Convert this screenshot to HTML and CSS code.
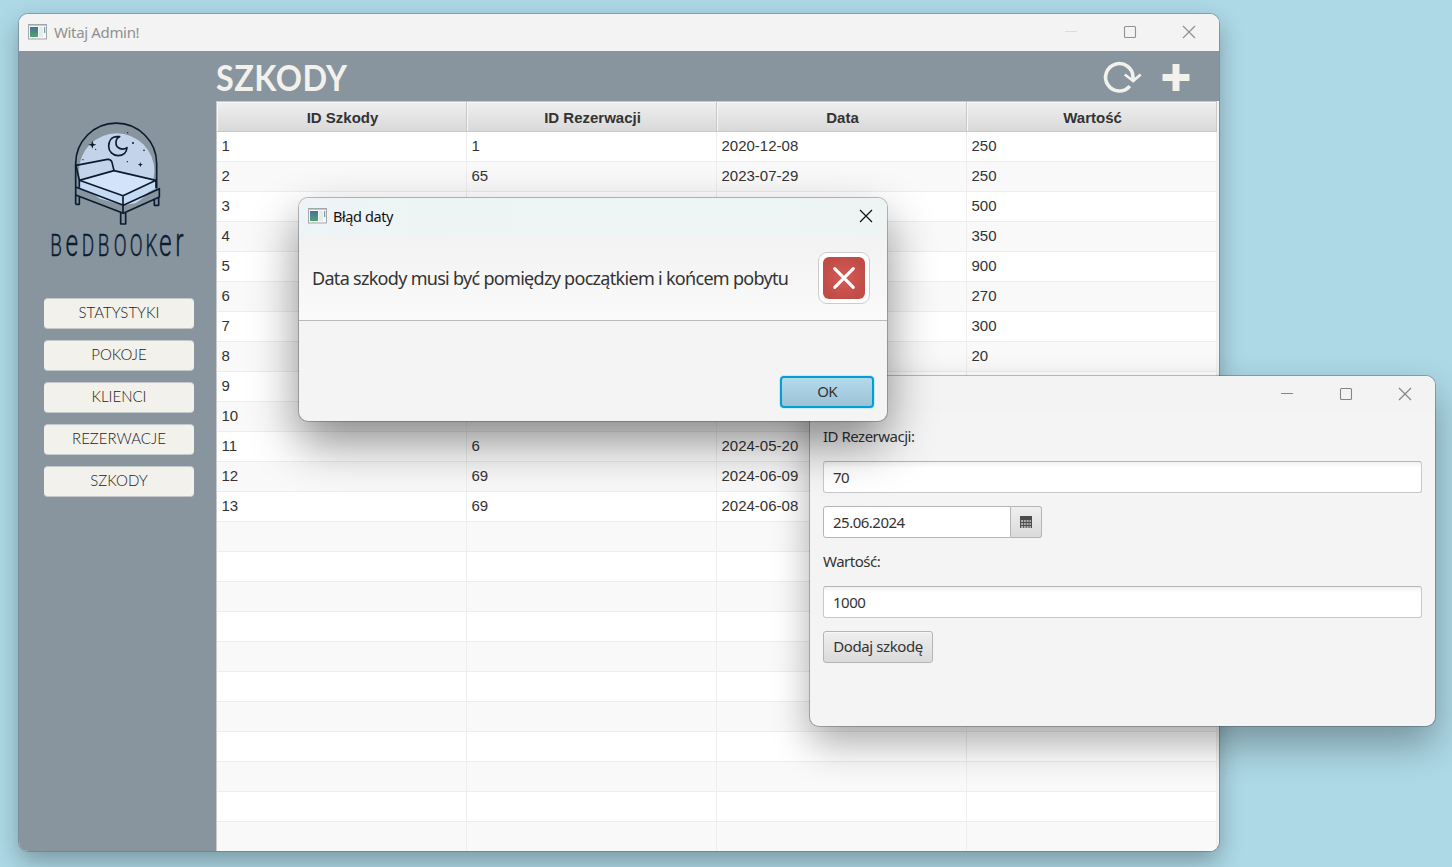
FILE: index.html
```html
<!DOCTYPE html>
<html lang="pl">
<head>
<meta charset="utf-8">
<title>Witaj Admin!</title>
<link rel="stylesheet" href="styles.css">
</head>
<body>
<svg class="defs" width="0" height="0">
  <defs>
    <linearGradient id="g" x1="0" y1="0" x2="0" y2="1"><stop offset="0" stop-color="#47709a"/><stop offset="1" stop-color="#4fa570"/></linearGradient>
    <symbol id="app" viewBox="0 0 20 16">
      <rect x=".5" y=".5" width="18" height="14.5" fill="#f6f7f7" stroke="#a2a7ad"/>
      <path d="M1 1.5h17" stroke="#c3c8d2"/>
      <rect x="2" y="3" width="8" height="10" fill="url(#g)"/>
      <rect x="11" y="3" width="4" height="10" fill="#e9ebeb"/>
      <path d="M16.7 3v6" stroke="#4f9499"/>
    </symbol>
    <symbol id="min" viewBox="0 0 14 14"><path d="M1 6.5h12" stroke="currentColor"/></symbol>
    <symbol id="max" viewBox="0 0 14 14"><rect x="1.5" y="1.5" width="11" height="11" rx="1" fill="none" stroke="currentColor" stroke-width="1.1"/></symbol>
    <symbol id="close" viewBox="0 0 14 14"><path d="M1 1l12 12M13 1L1 13" stroke="currentColor" stroke-width="1.2"/></symbol>
  </defs>
</svg>

<section class="window main">
  <header class="titlebar inactive">
    <svg class="app"><use href="#app"/></svg><span class="t-main">Witaj Admin!</span>
    <div class="controls"><svg class="faint"><use href="#min"/></svg><svg><use href="#max"/></svg><svg><use href="#close"/></svg></div>
  </header>
  <div class="body">
    <aside>
      <svg class="logo" viewBox="0 0 480 465" width="160" height="155">
        <circle cx="230" cy="180" r="113" fill="#c3d3e9"/>
        <path d="M118 208L222 179L348 208L249 254Z" fill="#d3e4fa"/>
        <path d="M118 208L249 254L348 208V232L250 282L118 232Z" fill="#c7daf3"/>
        <path d="M107 228L250 283L358 233V258L250 307L107 252Z" fill="#88949e"/>
        <path d="M139 235L249 277L326 241Q312 262 286 277L250 283L180 263Z" fill="#c7daf3"/>
        <path d="M165 274L249 307L320 275Q291 292 230 293Q190 288 165 274Z" fill="#88949e"/>
        <g fill="none" stroke="#0b1c31" stroke-width="5" stroke-linejoin="round">
          <path d="M107 280V158A121 121 0 0 1 350 158V232"/>
          <path d="M108 163L202 145Q213 144 216 154L222 179L118 208Z"/>
          <path d="M222 179L348 208L249 254L118 208M249 254V305M118 208V230M348 208V232"/>
          <path d="M107 228L250 283L358 233V258L250 307L107 252M107 280H118V256M242 306V339H257V304M343 267V283H356V258"/>
          <path d="M231 77C212 77 206 93 206 106A28 28 0 0 0 234 134C251 134 260 123 261 110C247 119 227 112 228 94C228 86 231 80 239 77Z"/>
        </g>
        <g fill="#0b1c31">
          <path d="M157 89l3 9 9 3-9 3-3 9-3-9-9-3 9-3z"/><path d="M301 153l2 6 6 2-6 2-2 6-2-6-6-2 6-2z"/>
          <circle cx="279" cy="96" r="3"/><circle cx="312" cy="118" r="2.5"/><circle cx="262" cy="152" r="2"/><circle cx="263" cy="65" r="2"/><circle cx="129" cy="146" r="2"/><circle cx="167" cy="115" r="2"/>
        </g>
        <text class="wordmark" transform="translate(0 434) scale(.62 1)" font-size="92"><tspan x="50">B</tspan><tspan x="124" font-size="118">e</tspan><tspan x="202" font-size="92">D</tspan><tspan x="279">B</tspan><tspan x="357">O</tspan><tspan x="434">O</tspan><tspan x="511">K</tspan><tspan x="576" font-size="118">e</tspan><tspan x="655" font-size="120">r</tspan></text>
      </svg>
      <nav>
        <button>STATYSTYKI</button>
        <button>POKOJE</button>
        <button>KLIENCI</button>
        <button>REZERWACJE</button>
        <button>SZKODY</button>
      </nav>
    </aside>
    <main>
      <div class="heading">
        <h1>SZKODY</h1>
        <div class="actions">
          <svg width="40" height="36" viewBox="0 0 40 36"><path d="M27.8 26.1A13.7 13.7 0 1 1 31 17.3V20" fill="none" stroke="#f2f1eb" stroke-width="3.6"/><path d="M22.8 14.5L31.2 21L38.7 14.5" fill="none" stroke="#f2f1eb" stroke-width="2.8"/></svg>
          <svg width="28" height="28" viewBox="0 0 28 28"><path d="M10.5 0h7v10h10v7h-10v10h-7v-10h-10v-7h10z" fill="#f2f1eb"/></svg>
        </div>
      </div>
      <table>
        <thead><tr><th>ID Szkody</th><th>ID Rezerwacji</th><th>Data</th><th>Wartość</th></tr></thead>
        <tbody>
          <tr><td>1</td><td>1</td><td>2020-12-08</td><td>250</td></tr>
          <tr><td>2</td><td>65</td><td>2023-07-29</td><td>250</td></tr>
          <tr><td>3</td><td></td><td></td><td>500</td></tr>
          <tr><td>4</td><td></td><td></td><td>350</td></tr>
          <tr><td>5</td><td></td><td></td><td>900</td></tr>
          <tr><td>6</td><td></td><td></td><td>270</td></tr>
          <tr><td>7</td><td></td><td></td><td>300</td></tr>
          <tr><td>8</td><td></td><td></td><td>20</td></tr>
          <tr><td>9</td><td></td><td></td><td></td></tr>
          <tr><td>10</td><td></td><td></td><td></td></tr>
          <tr><td>11</td><td>6</td><td>2024-05-20</td><td></td></tr>
          <tr><td>12</td><td>69</td><td>2024-06-09</td><td></td></tr>
          <tr><td>13</td><td>69</td><td>2024-06-08</td><td></td></tr>
          <tr><td></td><td></td><td></td><td></td></tr>
          <tr><td></td><td></td><td></td><td></td></tr>
          <tr><td></td><td></td><td></td><td></td></tr>
          <tr><td></td><td></td><td></td><td></td></tr>
          <tr><td></td><td></td><td></td><td></td></tr>
          <tr><td></td><td></td><td></td><td></td></tr>
          <tr><td></td><td></td><td></td><td></td></tr>
          <tr><td></td><td></td><td></td><td></td></tr>
          <tr><td></td><td></td><td></td><td></td></tr>
          <tr><td></td><td></td><td></td><td></td></tr>
          <tr><td></td><td></td><td></td><td></td></tr>
        </tbody>
      </table>
    </main>
  </div>
</section>

<section class="window form">
  <header class="titlebar inactive">
    <div class="controls"><svg><use href="#min"/></svg><svg><use href="#max"/></svg><svg><use href="#close"/></svg></div>
  </header>
  <div class="fields">
    <label class="l1">ID Rezerwacji:</label>
    <div class="input">70</div>
    <div class="date"><div class="input">25.06.2024</div><div class="picker"><svg width="12" height="12" viewBox="0 0 12 12"><path d="M0 0h12v12H0z" fill="#4c4c4c"/><path d="M1 5h10M1 8h10M1 11h10" stroke="#ccc" stroke-width="1.6" stroke-dasharray="2 .8"/></svg></div></div>
    <label class="l2">Wartość:</label>
    <div class="input">1000</div>
    <button class="add">Dodaj szkodę</button>
  </div>
</section>

<section class="window dialog">
  <header class="titlebar">
    <svg class="app"><use href="#app"/></svg><span class="t-dialog">Błąd daty</span>
    <div class="controls"><svg><use href="#close"/></svg></div>
  </header>
  <div class="message"><p>Data szkody musi być pomiędzy początkiem i końcem pobytu</p>
    <div class="error"><svg width="42" height="42" viewBox="0 0 43 43"><path d="M12 12L31 31M31 12L12 31" stroke="#fff" stroke-width="3.2" stroke-linecap="round"/></svg></div>
  </div>
  <div class="foot"><button class="ok">OK</button></div>
</section>
</body>
</html>
```

FILE: styles.css
```css
* { box-sizing: border-box; }
body {
  margin: 0;
  width: 1452px;
  height: 867px;
  overflow: hidden;
  position: relative;
  background: #add8e6;
  font: 15px "Noto Sans", sans-serif;
  color: #333;
}
.defs { position: absolute; }
button { font: inherit; color: inherit; padding: 0; }

/* windows */
.window {
  position: absolute;
  border-radius: 9px;
  background: #f4f4f4;
  display: flex;
  flex-direction: column;
  overflow: hidden;
}
.main {
  left: 19px; top: 14px; width: 1200px; height: 837px;
  box-shadow: 0 0 0 1px rgba(80,90,95,.4), 0 10px 24px rgba(0,0,0,.3);
}
.form {
  left: 810px; top: 376px; width: 625px; height: 350px;
  box-shadow: 0 0 0 1px rgba(60,65,70,.35), 0 18px 38px rgba(0,0,0,.32);
}
.dialog {
  left: 299px; top: 198px; width: 588px; height: 223px;
  box-shadow: 0 0 0 1px rgba(60,65,70,.35), 0 22px 48px rgba(0,0,0,.45);
}
.titlebar {
  flex: none;
  height: 37px;
  display: flex;
  align-items: center;
  padding: 0 0 2px 9px;
  background: #f3f3f3;
  color: #111;
}
.inactive { color: #909090; }
.app { width: 20px; height: 16px; margin-right: 6px; }
.controls { margin-left: auto; display: flex; gap: 45px; padding-right: 23px; }
.controls svg { width: 14px; height: 14px; }
.controls .faint { color: #dcdcdc; }
.t-main { letter-spacing: -.35px; }
.t-dialog { letter-spacing: -.4px; font-size: 14.5px; margin-left: -1px; }

/* main window */
.body { flex: 1; display: flex; background: #88949e; min-height: 0; }
aside { width: 197px; padding: 60px 0 0 21px; }
.logo { display: block; }
.wordmark { font-family: Roboto, sans-serif; font-weight: 300; fill: #0b1c31; stroke: #0b1c31; stroke-width: 1.2; }
nav { display: flex; flex-direction: column; gap: 11px; padding: 32px 0 0 4px; }
nav button {
  width: 150px; height: 31px;
  border: 1px solid #c3c8c9;
  border-width: 1px 0;
  border-radius: 4px;
  background: #f2f1eb;
  font: 300 15px/27px Lato, sans-serif;
  color: #222;
  padding-bottom: 2px;
}
main { width: 1003px; display: flex; flex-direction: column; }
.heading { height: 50px; flex: none; display: flex; align-items: center; justify-content: space-between; padding-right: 29px; }
h1 { margin: 2px 0 0; font: 700 36px/50px Lato, sans-serif; color: #f2f1eb; letter-spacing: .5px; transform: scaleX(.9); transform-origin: left; }
.actions { display: flex; align-items: center; gap: 20px; padding-top: 4px; }
table {
  border-collapse: separate;
  border-spacing: 0;
  table-layout: fixed;
  width: 1003px;
  border-left: 1px solid #c8c8c8;
  background: #f4f4f4;
  font: 15px "Liberation Sans", Arial, sans-serif;
  padding-right: 2px;
}
th, td { height: 30px; padding: 0 0 2px 4.5px; border-right: 1px solid #ededed; border-bottom: 1px solid #ededed; text-align: left; line-height: 27px; }
th {
  height: 31px;
  padding: 2px 0 0 2px;
  text-align: center;
  color: #333;
  background: linear-gradient(#efefef, #d9d9d9);
  border-top: 1px solid #c8c8c8;
  border-right-color: #c8c8c8;
  border-bottom-color: #c8c8c8;
  box-shadow: inset 1px 1px #f7f7f7;
}
tbody tr { background: #fff; }
tbody tr:nth-child(even) { background: #f9f9f9; }

/* form window */
.form .titlebar { color: #858585; }
.fields { display: flex; flex-direction: column; align-items: flex-start; padding: 11px 13px; }
label { line-height: 24px; height: 26px; letter-spacing: -.5px; }
.input {
  width: 599px; height: 32px;
  border: 1px solid #c8c8c8;
  border-top-color: #b5b5b5;
  border-radius: 3px;
  background: linear-gradient(#f2f2f2, #fff 6px);
  padding-left: 9px;
  line-height: 31px;
  letter-spacing: -.5px;
}
.l1 { margin-bottom: 11px; }
.date { display: flex; margin-top: 13px; }
.date .input { width: 188px; background: #fff; border-color: #b5b5b5; border-radius: 3px 0 0 3px; }
.picker { width: 31px; height: 32px; border: 1px solid #b5b5b5; border-left: 0; border-radius: 0 3px 3px 0; background: linear-gradient(#efefef, #dadada); display: flex; align-items: center; justify-content: center; }
.l2 { margin: 11px 0 11px; }
.add {
  width: 110px; height: 32px; margin-top: 13px;
  border: 1px solid #b5b5b5;
  border-radius: 3px;
  background: linear-gradient(#efefef, #dadada);
  box-shadow: inset 0 1px #f8f8f8;
  letter-spacing: -.4px;
  padding-bottom: 2px;
}

/* dialog */
.dialog .titlebar { background: linear-gradient(90deg, #eef3f7, #edf5f4 20%, #eef4f4); }
.dialog .controls { padding-right: 14px; }
.message {
  height: 86px; flex: none;
  display: flex; align-items: center; justify-content: space-between;
  padding: 0 17px 0 13px;
  border-bottom: 1px solid #bababa;
  background: linear-gradient(#f2f2f2, #fafafa);
}
.message p { margin: 0; font-size: 18px; letter-spacing: -.7px; white-space: nowrap; }
.error { width: 52px; height: 52px; flex: none; padding: 4px; border: 1px solid #ccc; border-radius: 9px; background: #fff; }
.error svg { display: block; border-radius: 6px; background: radial-gradient(#d65a56, #c04c47 75%); }
.foot { flex: 1; display: flex; justify-content: flex-end; align-items: flex-end; padding: 0 13px 13px; }
.ok { width: 94px; height: 32px; border: 2px solid #039ed3; border-radius: 4px; background: linear-gradient(#b3dbec, #9bc2d6); box-shadow: 0 0 0 1px #c9eaf5; letter-spacing: -.8px; padding-bottom: 2px; }
```
